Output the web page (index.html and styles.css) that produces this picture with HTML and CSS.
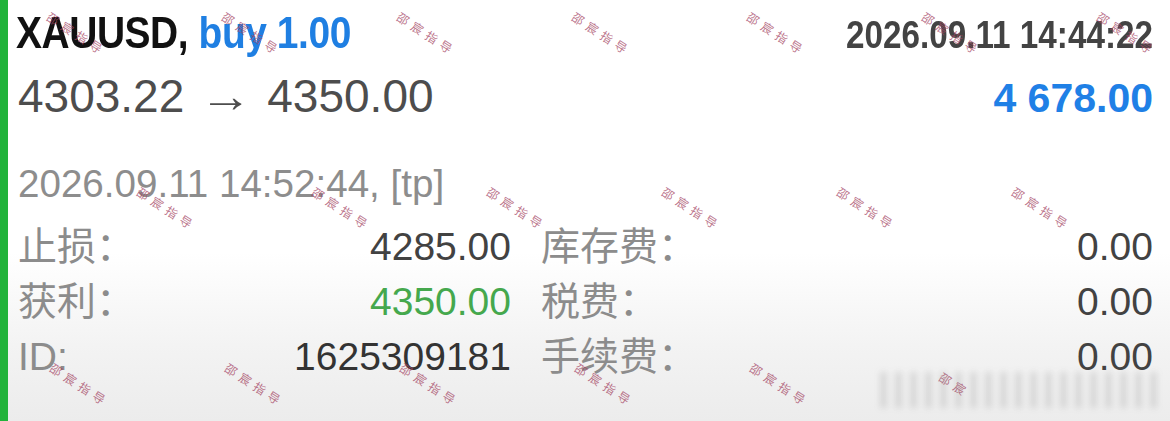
FILE: index.html
```html
<!DOCTYPE html>
<html lang="zh">
<head>
<meta charset="utf-8">
<title>XAUUSD</title>
<link rel="stylesheet" href="styles.css">
</head>
<body>
<div class="card">
  <div class="bar"></div>
  <div class="content">
    <div class="row head">
      <div class="title"><span class="sym">XAUUSD,</span> <span class="side">buy 1.00</span></div>
      <div class="open-time">2026.09.11 14:44:22</div>
    </div>
    <div class="row prices">
      <div class="path">4303.22<span class="arrow">→</span>4350.00</div>
      <div class="profit">4 678.00</div>
    </div>
    <div class="close-time">2026.09.11 14:52:44, [tp]</div>
    <div class="grid">
      <div class="cell"><span class="label">止损：</span><span class="val">4285.00</span></div>
      <div class="cell"><span class="label">库存费：</span><span class="val">0.00</span></div>
      <div class="cell"><span class="label">获利：</span><span class="val green">4350.00</span></div>
      <div class="cell"><span class="label">税费：</span><span class="val">0.00</span></div>
      <div class="cell"><span class="label">ID:</span><span class="val dark">1625309181</span></div>
      <div class="cell"><span class="label">手续费：</span><span class="val">0.00</span></div>
    </div>
  </div>
  <div class="wm-layer">
    <div class="wm-row a">
      <span class="wm"><i>邵宸指导</i></span><span class="wm"><i>邵宸指导</i></span><span class="wm"><i>邵宸指导</i></span><span class="wm"><i>邵宸指导</i></span><span class="wm"><i>邵宸指导</i></span><span class="wm"><i>邵宸指导</i></span><span class="wm"><i>邵宸指导</i></span>
    </div>
    <div class="wm-row b">
      <span class="wm"><i>邵宸指导</i></span><span class="wm"><i>邵宸指导</i></span><span class="wm"><i>邵宸指导</i></span><span class="wm"><i>邵宸指导</i></span><span class="wm"><i>邵宸指导</i></span><span class="wm"><i>邵宸指导</i></span>
    </div>
    <div class="wm-row c">
      <span class="wm"><i>邵宸指导</i></span><span class="wm"><i>邵宸指导</i></span><span class="wm"><i>邵宸指导</i></span><span class="wm"><i>邵宸指导</i></span><span class="wm"><i>邵宸指导</i></span><span class="wm"><i>邵宸</i></span>
    </div>
  </div>
  <div class="smudge"></div>
</div>
</body>
</html>
```

FILE: styles.css
```css
html, body {
  margin: 0;
  padding: 0;
  background: #fff;
}
.card {
  position: relative;
  width: 1170px;
  height: 421px;
  display: flex;
  overflow: hidden;
  background: linear-gradient(to bottom, #ffffff 0%, #ffffff 60%, #f3f3f3 82%, #ececec 100%);
  font-family: "Liberation Sans", "Noto Sans CJK SC", sans-serif;
}
.bar {
  width: 8px;
  flex: none;
  background: #22b33b;
}
.content {
  flex: 1;
  padding: 1px 17px 0 8px;
}
.row {
  display: flex;
  justify-content: space-between;
  align-items: baseline;
}
.head {
  height: 64px;
  line-height: 64px;
}
.title {
  display: inline-block;
  font-weight: bold;
  font-size: 44px;
  letter-spacing: -0.5px;
  transform: scaleX(0.885);
  transform-origin: left center;
  white-space: nowrap;
}
.sym { color: #111; }
.side { color: #1f7fe2; }
.open-time {
  display: inline-block;
  font-weight: bold;
  font-size: 39px;
  color: #434343;
  transform: scaleX(0.853);
  transform-origin: right center;
  white-space: nowrap;
}
.prices {
  height: 63px;
  line-height: 63px;
}
.path {
  font-size: 46px;
  color: #4d4d4d;
  padding-left: 2px;
}
.arrow {
  display: inline-block;
  margin: 0 18px 0 19px;
  transform: scaleX(1.15);
}
.profit {
  font-weight: bold;
  font-size: 41px;
  color: #1f80e6;
}
.close-time {
  margin-top: 30px;
  height: 51px;
  line-height: 51px;
  font-size: 38.6px;
  color: #8d8d8d;
  padding-left: 2px;
}
.grid {
  margin-top: 10px;
  padding-left: 2px;
  display: grid;
  grid-template-columns: 493px 1fr;
  column-gap: 30px;
  grid-auto-rows: 55px;
}
.cell {
  display: flex;
  justify-content: space-between;
  align-items: baseline;
  height: 55px;
  line-height: 55px;
  font-size: 39px;
}
.label { color: #8c8c8c; }
.val { color: #424242; }
.val.green { color: #45a84d; }
.val.dark { color: #333; }

/* watermark overlay */
.wm-layer {
  position: absolute;
  inset: 0;
  pointer-events: none;
}
.wm-row {
  position: absolute;
  left: 0;
  display: flex;
  gap: 115px;
}
.wm-row.a { top: 15px; left: 47px; }
.wm-row.b { top: 190px; left: 137px; }
.wm-row.c { top: 366px; left: 50px; }
.wm {
  width: 60px;
  height: 37px;
  display: flex;
  align-items: center;
  justify-content: center;
  flex: none;
}
.wm i {
  font-style: normal;
  white-space: nowrap;
  font-family: "Noto Sans CJK SC", sans-serif;
  font-size: 12px;
  letter-spacing: 5px;
  color: rgba(165, 70, 100, 0.75);
  transform: rotate(33deg);
}
.smudge {
  position: absolute;
  left: 880px;
  top: 372px;
  width: 280px;
  height: 36px;
  background: repeating-linear-gradient(90deg, rgba(140,140,140,0.35) 0 7px, rgba(255,255,255,0) 7px 15px);
  filter: blur(3px);
  opacity: 0.7;
}
```
